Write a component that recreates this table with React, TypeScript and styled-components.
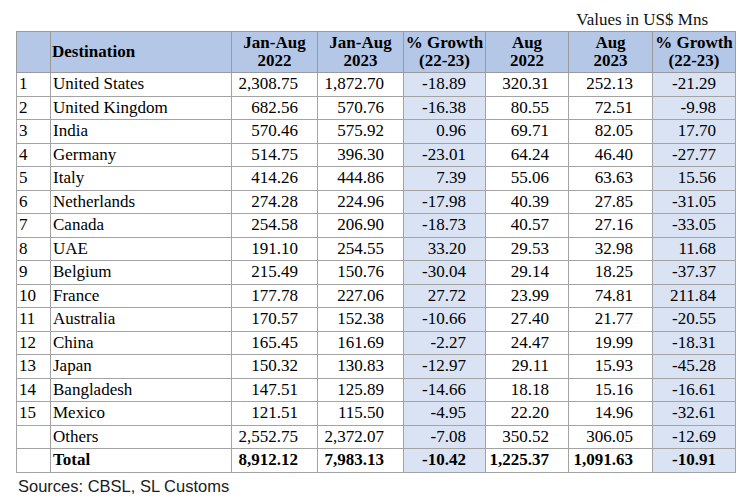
import React from "react";
import styled, { createGlobalStyle } from "styled-components";

const GlobalStyle = createGlobalStyle`
    body {
        margin: 0;
        background: #ffffff;
    }
`;

interface RowData {
    no: string;
    name: string;
    values: string[];
}

const Page = styled.div`
    width: 750px;
    height: 504px;
    display: flex;
    flex-direction: column;
    padding: 8px 0 0 16px;
    box-sizing: border-box;
    background: #fff;
`;

const Caption = styled.div`
    width: 719px;
    text-align: right;
    padding-right: 27px;
    box-sizing: border-box;
    font-family: "Liberation Serif", "Times New Roman", serif;
    font-size: 17px;
    line-height: 23px;
    color: #111;
`;

const Table = styled.table`
    width: 719px;
    border-collapse: collapse;
    table-layout: fixed;
    font-family: "Liberation Serif", "Times New Roman", serif;
    font-size: 17px;
    color: #000;
    border: 1px solid #8e8e8e;
`;

const HeadCell = styled.th<{ $left?: boolean }>`
    background: #b4c7e7;
    border: 1px solid #9a9a9a;
    height: 40px;
    padding: 0 1px;
    font-weight: bold;
    line-height: 18px;
    white-space: nowrap;
    text-align: ${(p) => (p.$left ? "left" : "center")};
    vertical-align: middle;
`;

const Cell = styled.td<{ $num?: boolean; $tint?: boolean; $bold?: boolean }>`
    border: 1px solid #a3a3a3;
    height: 22.5px;
    padding: ${(p) => (p.$num ? "0 19px 0 0" : "0 2px")};
    text-align: ${(p) => (p.$num ? "right" : "left")};
    background: ${(p) => (p.$tint ? "#dae3f3" : "#fff")};
    font-weight: ${(p) => (p.$bold ? "bold" : "normal")};
    line-height: 20px;
    white-space: nowrap;
`;

const Sources = styled.div`
    margin-top: 3px;
    padding-left: 2px;
    font-family: "Liberation Sans", Arial, sans-serif;
    font-size: 16.5px;
    line-height: 20px;
    color: #1b1b1b;
`;

const widths = [34, 181, 86, 86, 82, 83, 84, 83];

const rows: RowData[] = [
    { no: "1", name: "United States", values: ["2,308.75", "1,872.70", "-18.89", "320.31", "252.13", "-21.29"] },
    { no: "2", name: "United Kingdom", values: ["682.56", "570.76", "-16.38", "80.55", "72.51", "-9.98"] },
    { no: "3", name: "India", values: ["570.46", "575.92", "0.96", "69.71", "82.05", "17.70"] },
    { no: "4", name: "Germany", values: ["514.75", "396.30", "-23.01", "64.24", "46.40", "-27.77"] },
    { no: "5", name: "Italy", values: ["414.26", "444.86", "7.39", "55.06", "63.63", "15.56"] },
    { no: "6", name: "Netherlands", values: ["274.28", "224.96", "-17.98", "40.39", "27.85", "-31.05"] },
    { no: "7", name: "Canada", values: ["254.58", "206.90", "-18.73", "40.57", "27.16", "-33.05"] },
    { no: "8", name: "UAE", values: ["191.10", "254.55", "33.20", "29.53", "32.98", "11.68"] },
    { no: "9", name: "Belgium", values: ["215.49", "150.76", "-30.04", "29.14", "18.25", "-37.37"] },
    { no: "10", name: "France", values: ["177.78", "227.06", "27.72", "23.99", "74.81", "211.84"] },
    { no: "11", name: "Australia", values: ["170.57", "152.38", "-10.66", "27.40", "21.77", "-20.55"] },
    { no: "12", name: "China", values: ["165.45", "161.69", "-2.27", "24.47", "19.99", "-18.31"] },
    { no: "13", name: "Japan", values: ["150.32", "130.83", "-12.97", "29.11", "15.93", "-45.28"] },
    { no: "14", name: "Bangladesh", values: ["147.51", "125.89", "-14.66", "18.18", "15.16", "-16.61"] },
    { no: "15", name: "Mexico", values: ["121.51", "115.50", "-4.95", "22.20", "14.96", "-32.61"] },
    { no: "", name: "Others", values: ["2,552.75", "2,372.07", "-7.08", "350.52", "306.05", "-12.69"] },
];

const total: RowData = {
    no: "",
    name: "Total",
    values: ["8,912.12", "7,983.13", "-10.42", "1,225.37", "1,091.63", "-10.91"],
};

// growth columns (index in values) get the blue tint
const tinted = (i: number) => i === 2 || i === 5;

const DataRow = ({ row, bold }: { row: RowData; bold?: boolean }) => (
    <tr>
        <Cell>{row.no}</Cell>
        <Cell $bold={bold}>{row.name}</Cell>
        {row.values.map((v, i) => (
            <Cell key={i} $num $tint={tinted(i)} $bold={bold}>
                {v}
            </Cell>
        ))}
    </tr>
);

const App = () => (
    <>
        <GlobalStyle />
        <Page>
            <Caption>Values in US$ Mns</Caption>
            <Table>
                <colgroup>
                    {widths.map((w, i) => (
                        <col key={i} style={{ width: w }} />
                    ))}
                </colgroup>
                <thead>
                    <tr>
                        <HeadCell />
                        <HeadCell $left>Destination</HeadCell>
                        <HeadCell>
                            Jan-Aug
                            <br />
                            2022
                        </HeadCell>
                        <HeadCell>
                            Jan-Aug
                            <br />
                            2023
                        </HeadCell>
                        <HeadCell>
                            % Growth
                            <br />
                            (22-23)
                        </HeadCell>
                        <HeadCell>
                            Aug
                            <br />
                            2022
                        </HeadCell>
                        <HeadCell>
                            Aug
                            <br />
                            2023
                        </HeadCell>
                        <HeadCell>
                            % Growth
                            <br />
                            (22-23)
                        </HeadCell>
                    </tr>
                </thead>
                <tbody>
                    {rows.map((r) => (
                        <DataRow key={r.name} row={r} />
                    ))}
                    <DataRow row={total} bold />
                </tbody>
            </Table>
            <Sources>Sources: CBSL, SL Customs</Sources>
        </Page>
    </>
);

export default App;
